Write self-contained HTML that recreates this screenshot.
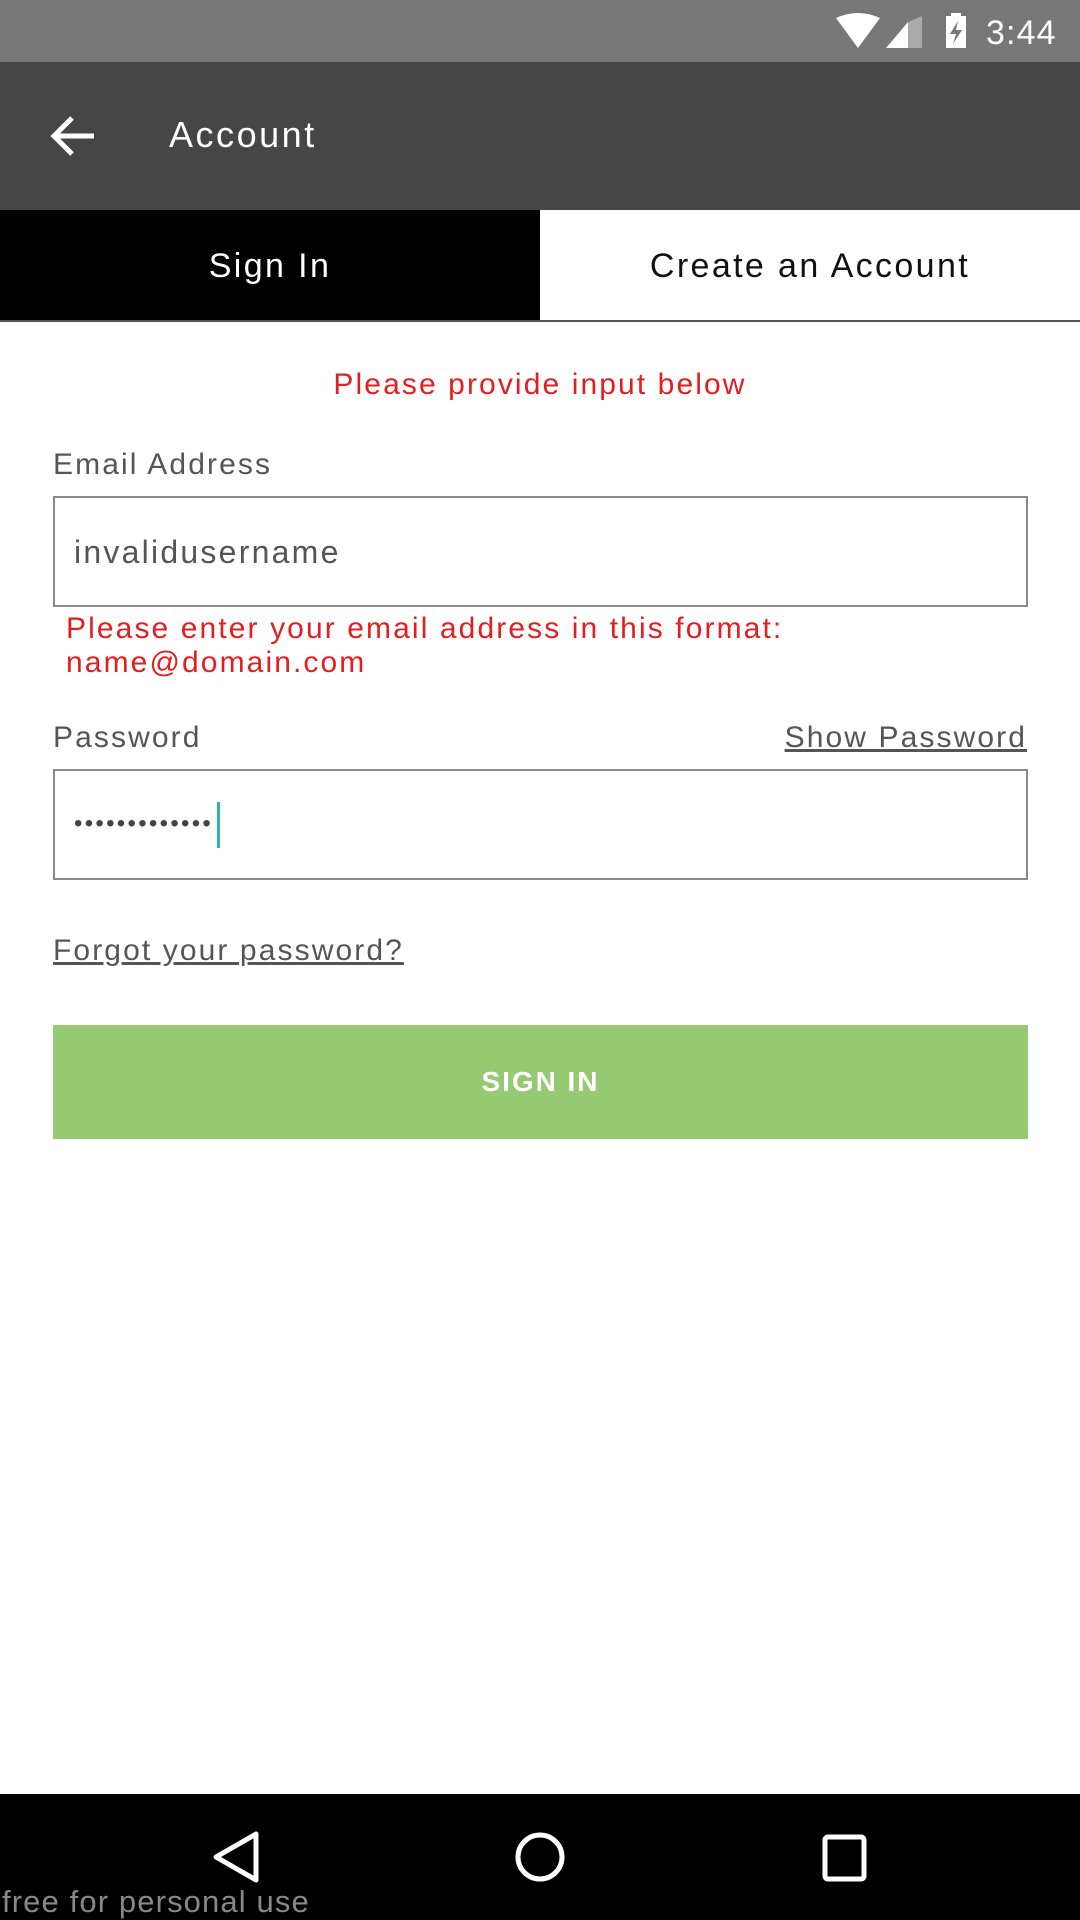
<!DOCTYPE html>
<html><head><meta charset="utf-8"><style>
*{margin:0;padding:0;box-sizing:border-box}
body{width:1080px;height:1920px;position:relative;background:#fff;font-family:"Liberation Sans",sans-serif;overflow:hidden}
.abs{position:absolute;white-space:nowrap;letter-spacing:0.07em}
</style></head><body>
<div class="abs" style="left:0;top:0;width:1080px;height:62px;background:#777"></div>
<svg class="abs" style="left:836px;top:12px" width="220" height="40" viewBox="0 0 220 40">
<path d="M0 6 Q22 -4 44 6 L22 36 Z" fill="#fff"/>
<path d="M50 36 L72 10 L72 36 Z" fill="#fff"/>
<path d="M72 10 L86 4 L86 36 L72 36Z" fill="#aaa"/>
<rect x="110" y="4" width="20" height="32" fill="#fff"/><rect x="115" y="1" width="10" height="4" fill="#fff"/>
<path d="M122 9 L114 22 L120 22 L117 32 L126 18 L120 18 Z" fill="#777"/>
<text x="150" y="32" fill="#fff" font-size="34" font-family="Liberation Sans">3:44</text>
</svg>
<div class="abs" style="left:0;top:62px;width:1080px;height:148px;background:#464646"></div>
<svg class="abs" style="left:50px;top:114px" width="46" height="44" viewBox="0 0 46 44"><path d="M44 22 H6 M22 4 L4 22 L22 40" stroke="#fff" stroke-width="5" fill="none"/></svg>
<div class="abs" style="left:169px;top:114px;font-size:36px;color:#fff">Account</div>
<div class="abs" style="left:0;top:210px;width:540px;height:112px;background:#000;color:#fff;font-size:34px;text-align:center;line-height:112px">Sign In</div>
<div class="abs" style="left:540px;top:210px;width:540px;height:112px;background:#fff;color:#111;font-size:34px;text-align:center;line-height:112px">Create an Account</div>
<div class="abs" style="left:0;top:320px;width:1080px;height:2px;background:#555"></div>
<div class="abs" style="left:0;top:368px;width:1080px;text-align:center;color:#e41e1e;font-size:30px">Please provide input below</div>
<div class="abs" style="left:53px;top:448px;color:#555;font-size:30px">Email Address</div>
<div class="abs" style="left:53px;top:496px;width:975px;height:111px;border:2px solid #888"></div>
<div class="abs" style="left:74px;top:534px;color:#555;font-size:32px">invalidusername</div>
<div class="abs" style="left:66px;top:612px;color:#e41e1e;font-size:30px;line-height:34px">Please enter your email address in this format:<br>name@domain.com</div>
<div class="abs" style="left:53px;top:721px;color:#555;font-size:30px">Password</div>
<div class="abs" style="right:53px;top:721px;color:#555;font-size:30px;text-decoration:underline">Show Password</div>
<div class="abs" style="left:53px;top:769px;width:975px;height:111px;border:2px solid #888"></div>
<div class="abs" style="left:74px;top:810px;color:#444;font-size:24px;letter-spacing:2.3px">•••••••••••••</div>
<div class="abs" style="left:217px;top:802px;width:3px;height:46px;background:#2bb5a5"></div>
<div class="abs" style="left:53px;top:934px;color:#555;font-size:30px;text-decoration:underline">Forgot your password?</div>
<div class="abs" style="left:53px;top:1025px;width:975px;height:114px;background:#95c972;color:#fff;font-size:28px;font-weight:bold;text-align:center;line-height:114px">SIGN IN</div>
<div class="abs" style="left:0;top:1794px;width:1080px;height:126px;background:#000"></div>
<svg class="abs" style="left:0;top:1794px" width="1080" height="126" viewBox="0 0 1080 126">
<path d="M256 40 L216 63 L256 86 Z" stroke="#fff" stroke-width="5" fill="none" stroke-linejoin="round"/>
<circle cx="540" cy="63" r="22" stroke="#fff" stroke-width="5" fill="none"/>
<rect x="825" y="43" width="39" height="42" rx="3" stroke="#fff" stroke-width="5" fill="none"/>
<text x="2" y="118" fill="#888" font-size="31" font-family="Liberation Sans">free for personal use</text>
</svg>
</body></html>
